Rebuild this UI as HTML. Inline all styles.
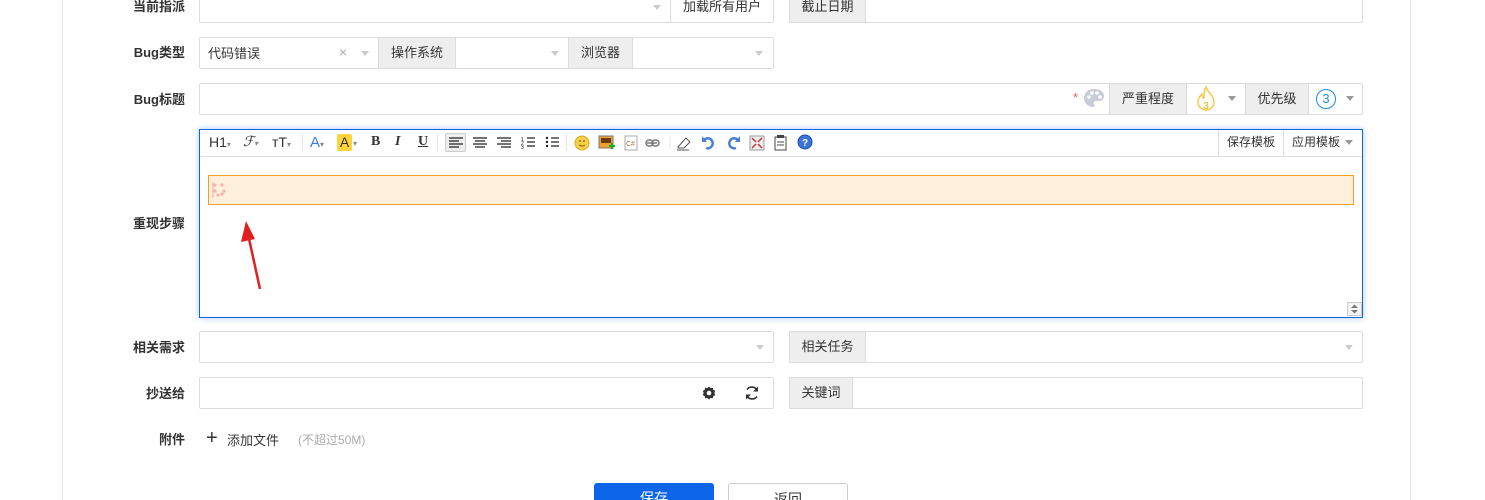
<!DOCTYPE html>
<html><head><meta charset="utf-8"><style>
*{box-sizing:border-box;margin:0;padding:0}
html,body{width:1485px;height:500px;overflow:hidden}
body{background:#fff;position:relative;font-family:"Liberation Sans","Noto Sans CJK SC",sans-serif;font-size:13px;color:#333}
.a{position:absolute}
.box{position:absolute;border:1px solid #dcdcdc;background:#fff;border-radius:2px}
.ad{position:absolute;border:1px solid #dcdcdc;background:#eee;color:#333;text-align:center;font-size:13px}
.lb{position:absolute;right:1300px;font-weight:bold;color:#333;font-size:13px}
.car{position:absolute;width:0;height:0;border-left:4px solid transparent;border-right:4px solid transparent;border-top:5px solid #ccc}
.tb{position:absolute;top:134px;font-size:14px;color:#333}
</style></head><body>
<div class="a" style="left:62px;top:0;width:1px;height:500px;background:#e5e5e5"></div>
<div class="a" style="left:1410px;top:0;width:1px;height:500px;background:#e5e5e5"></div>

<!-- row1 -->
<div class="lb" style="top:-4px">当前指派</div>
<div class="box" style="left:199px;top:-10px;width:472px;height:33px"></div>
<div class="car" style="left:653px;top:5px"></div>
<div class="box" style="left:670px;top:-10px;width:104px;height:33px;text-align:center;line-height:31px">加载所有用户</div>
<div class="ad" style="left:789px;top:-10px;width:77px;height:33px;line-height:31px">截止日期</div>
<div class="box" style="left:865px;top:-10px;width:498px;height:33px"></div>

<!-- row2 -->
<div class="lb" style="top:42px">Bug类型</div>
<div class="box" style="left:199px;top:37px;width:180px;height:32px"></div>
<div class="a" style="left:208px;top:43px">代码错误</div>
<div class="a" style="left:339px;top:44px;color:#aaa;font-size:14px">×</div>
<div class="car" style="left:361px;top:51px"></div>
<div class="ad" style="left:378px;top:37px;width:78px;height:32px;line-height:30px">操作系统</div>
<div class="box" style="left:455px;top:37px;width:114px;height:32px"></div>
<div class="car" style="left:551px;top:51px"></div>
<div class="ad" style="left:568px;top:37px;width:65px;height:32px;line-height:30px">浏览器</div>
<div class="box" style="left:632px;top:37px;width:142px;height:32px"></div>
<div class="car" style="left:755px;top:51px"></div>

<!-- row3 -->
<div class="lb" style="top:89px">Bug标题</div>
<div class="box" style="left:199px;top:83px;width:911px;height:32px"></div>
<div class="a" style="left:1073px;top:90px;color:#f55">*</div>
<svg class="a" style="left:1083px;top:88px" width="22" height="20" viewBox="0 0 22 20"><path d="M11 1C5 1 1 5 1 10c0 5 4 9 9 9 2 0 2-2 1-3-1-1 0-3 2-3h3c3 0 5-2 5-5C21 4 17 1 11 1z" fill="#c8ccd6"/><circle cx="6" cy="9" r="1.8" fill="#fff"/><circle cx="9" cy="5" r="1.8" fill="#fff"/><circle cx="14" cy="5" r="1.8" fill="#fff"/><circle cx="17" cy="9" r="1.8" fill="#fff"/></svg>
<div class="ad" style="left:1109px;top:83px;width:78px;height:32px;line-height:30px">严重程度</div>
<div class="box" style="left:1186px;top:83px;width:60px;height:32px"></div>
<svg class="a" style="left:1194px;top:85px" width="24" height="28" viewBox="0 0 24 28"><path d="M12 2c1 5 8 8 8 15a8 8 0 0 1-16 0c0-4 2-6 4-8 0 3 1 4 2 4 0-4 0-8 2-11z" fill="none" stroke="#f5c842" stroke-width="1.4"/><text x="12" y="24" font-size="10" fill="#f0b400" text-anchor="middle" font-family="Liberation Sans">3</text></svg>
<div class="car" style="left:1228px;top:96px;border-top-color:#999"></div>
<div class="ad" style="left:1245px;top:83px;width:64px;height:32px;line-height:30px">优先级</div>
<div class="box" style="left:1308px;top:83px;width:55px;height:32px"></div>
<div class="a" style="left:1316px;top:89px;width:20px;height:20px;border:1.5px solid #1a8ae8;border-radius:50%;color:#1a8ae8;text-align:center;line-height:17px;font-size:13px">3</div>
<div class="car" style="left:1346px;top:96px;border-top-color:#999"></div>

<!-- editor -->
<div class="lb" style="top:213px">重现步骤</div>
<div class="a" style="left:199px;top:129px;width:1164px;height:189px;border:1px solid #1064e8;box-shadow:0 0 6px rgba(16,100,232,.35);background:#fff"></div>
<div class="a" style="left:200px;top:156px;width:1162px;height:1px;background:#ddd"></div>
<div class="tb" style="left:209px">H1<span style="font-size:8px;color:#888">▾</span></div>
<div class="tb" style="left:243px;font-style:italic;font-family:'Liberation Serif',serif">ℱ<span style="font-size:8px;color:#888">▾</span></div>
<div class="tb" style="left:272px">ᴛT<span style="font-size:8px;color:#888">▾</span></div>
<div class="a" style="left:302px;top:134px;width:1px;height:17px;background:#e4e4e4"></div>
<div class="tb" style="left:310px;color:#3a7be0;font-size:15px">A<span style="font-size:8px;color:#888">▾</span></div>
<div class="a" style="left:337px;top:134px;width:15px;height:17px;background:#ffd43b;border-radius:2px;text-align:center;line-height:17px;font-size:14px">A</div><div class="tb" style="left:353px;font-size:8px;color:#888;top:139px">▾</div>
<div class="tb" style="left:371px;font-weight:bold;font-family:'Liberation Serif',serif">B</div>
<div class="tb" style="left:395px;font-style:italic;font-weight:bold;font-family:'Liberation Serif',serif">I</div>
<div class="tb" style="left:418px;text-decoration:underline;font-weight:bold;font-family:'Liberation Serif',serif">U</div>
<div class="a" style="left:437px;top:134px;width:1px;height:17px;background:#e4e4e4"></div>
<div class="a" style="left:445px;top:133px;width:21px;height:19px;border:1px solid #ccc;background:#eee;border-radius:2px"></div>
<svg class="a" style="left:447px;top:136px" width="130" height="14"><g stroke="#222" stroke-width="1.2"><path d="M2 2h14M2 5h10M2 8h14M2 11h10"/><path d="M26 2h14M28 5h10M26 8h14M28 11h10"/><path d="M50 2h14M54 5h10M50 8h14M54 11h10"/><path d="M80 2h8M80 6h8M80 10h8"/><path d="M104 2h8M104 6h8M104 10h8"/></g><g fill="#222" font-size="5" font-family="Liberation Sans"><text x="74" y="5">1</text><text x="74" y="9">2</text><text x="74" y="13">3</text></g><g fill="#222"><circle cx="100" cy="2" r="1.2"/><circle cx="100" cy="6" r="1.2"/><circle cx="100" cy="10" r="1.2"/></g></svg>
<div class="a" style="left:566px;top:134px;width:1px;height:17px;background:#e4e4e4"></div>
<svg class="a" style="left:574px;top:134px" width="240" height="18"><circle cx="8" cy="9" r="7" fill="#f5d04a" stroke="#d9a920"/><circle cx="6" cy="7" r=".9" fill="#8a5a00"/><circle cx="10" cy="7" r=".9" fill="#8a5a00"/><path d="M5 11q3 2 6 0" stroke="#8a5a00" fill="none"/>
<rect x="25" y="2" width="14" height="12" fill="#f0a030" stroke="#777"/><rect x="27" y="4" width="10" height="5" fill="#6b3a10"/><path d="M35 12h6M38 9v6" stroke="#2a2" stroke-width="2"/>
<rect x="51" y="2" width="12" height="14" fill="#fff" stroke="#aaa"/><text x="52" y="12" font-size="7" fill="#9a7a40" font-family="Liberation Sans">C#</text>
<path d="M73 9h10" stroke="#777" stroke-width="1.5"/><rect x="72" y="6" width="7" height="6" rx="3" fill="none" stroke="#777" stroke-width="1.5"/><rect x="78" y="6" width="7" height="6" rx="3" fill="none" stroke="#777" stroke-width="1.5"/>
<line x1="96" y1="3" x2="96" y2="15" stroke="#e4e4e4"/>
<path d="M104 13l8-9 4 4-6 6h-6z" fill="#fff" stroke="#555"/><path d="M103 16h12" stroke="#555"/>
<path d="M130 6a5 5 0 1 1 2 8" fill="none" stroke="#4a7fd6" stroke-width="2.5"/><path d="M128 2v6h5z" fill="#4a7fd6"/>
<path d="M164 6a5 5 0 1 0-2 8" fill="none" stroke="#4a7fd6" stroke-width="2.5"/><path d="M166 2v6h-5z" fill="#4a7fd6"/>
<rect x="176" y="2" width="14" height="14" fill="#eee" stroke="#999"/><path d="M178 4l4 4M188 4l-4 4M178 14l4-4M188 14l-4-4" stroke="#c33" stroke-width="1.5"/>
<rect x="201" y="3" width="11" height="13" fill="#fff" stroke="#444"/><rect x="203" y="1" width="7" height="3" fill="#444"/><path d="M203 8h7M203 11h7" stroke="#444"/>
<circle cx="231" cy="8" r="7" fill="#3a74d8" stroke="#1c4fa8"/><text x="231" y="12" font-size="10" fill="#fff" text-anchor="middle" font-weight="bold" font-family="Liberation Sans">?</text></svg>
<div class="a" style="left:1218px;top:130px;width:66px;height:26px;border-left:1px solid #ddd;border-right:1px solid #ddd;text-align:center;line-height:25px;font-size:12px">保存模板</div>
<div class="a" style="left:1292px;top:130px;line-height:25px;font-size:12px">应用模板</div>
<div class="car" style="left:1345px;top:140px;border-top-color:#999"></div>
<div class="a" style="left:208px;top:175px;width:1146px;height:30px;border:1px solid #f5a020;background:#fff0dd"></div>
<svg class="a" style="left:210px;top:180px" width="26" height="20"><path d="M3 2v16" stroke="#f9a0a0"/><g fill="#f9b0b0"><circle cx="5" cy="5" r="1.6"/><circle cx="12" cy="5" r="1.6"/><circle cx="14" cy="11" r="1.6"/><circle cx="5" cy="11" r="1.6"/><circle cx="8" cy="15" r="1.6"/><circle cx="12" cy="14" r="1.6"/></g></svg>
<svg class="a" style="left:1347px;top:302px" width="15" height="14"><rect x=".5" y=".5" width="14" height="13" fill="#f4f4f4" stroke="#ccc"/><path d="M4 6l3.5-3.5L11 6zM4 8l3.5 3.5L11 8z" fill="#777"/></svg>
<svg class="a" style="left:238px;top:218px" width="30" height="75"><path d="M22 71L10 16" stroke="#e02020" stroke-width="2.5"/><path d="M8 3L3 24l14-3z" fill="#e02020"/></svg>

<!-- 相关需求 -->
<div class="lb" style="top:337px">相关需求</div>
<div class="box" style="left:199px;top:331px;width:575px;height:32px"></div>
<div class="car" style="left:756px;top:345px"></div>
<div class="ad" style="left:789px;top:331px;width:77px;height:32px;line-height:30px">相关任务</div>
<div class="box" style="left:865px;top:331px;width:498px;height:32px"></div>
<div class="car" style="left:1345px;top:345px"></div>

<!-- 抄送给 -->
<div class="lb" style="top:383px">抄送给</div>
<div class="box" style="left:199px;top:377px;width:575px;height:32px"></div>
<svg class="a" style="left:702px;top:386px" width="14" height="14" viewBox="0 0 14 14"><path d="M7 0.5l1.6 1.5 2.2-.3.5 2.1 1.9 1.2-.9 2 .9 2-1.9 1.2-.5 2.1-2.2-.3L7 13.5 5.4 12l-2.2.3-.5-2.1-1.9-1.2.9-2-.9-2 1.9-1.2.5-2.1 2.2.3z" fill="#333"/><circle cx="7" cy="7" r="2.3" fill="#fff"/></svg>
<svg class="a" style="left:744px;top:385px" width="16" height="16" viewBox="0 0 16 16"><path d="M13.5 6A6 6 0 0 0 3 4.5M2.5 10A6 6 0 0 0 13 11.5" fill="none" stroke="#333" stroke-width="1.6"/><path d="M14 1.5v5h-5zM2 14.5v-5h5z" fill="#333"/></svg>
<div class="ad" style="left:789px;top:377px;width:64px;height:32px;line-height:30px">关键词</div>
<div class="box" style="left:852px;top:377px;width:511px;height:32px"></div>

<!-- 附件 -->
<div class="lb" style="top:429px">附件</div>
<div class="a" style="left:206px;top:427px;font-size:20px;color:#333;font-weight:300">+</div>
<div class="a" style="left:227px;top:430px">添加文件</div>
<div class="a" style="left:298px;top:431px;color:#aaa;font-size:12px">(不超过50M)</div>

<!-- buttons -->
<div class="a" style="left:594px;top:483px;width:120px;height:32px;background:#0c64e8;border-radius:3px;color:#fff;text-align:center;line-height:30px;font-size:14px">保存</div>
<div class="a" style="left:728px;top:483px;width:120px;height:32px;background:#fff;border:1px solid #ccc;border-radius:3px;text-align:center;line-height:30px;font-size:14px">返回</div>
</body></html>
